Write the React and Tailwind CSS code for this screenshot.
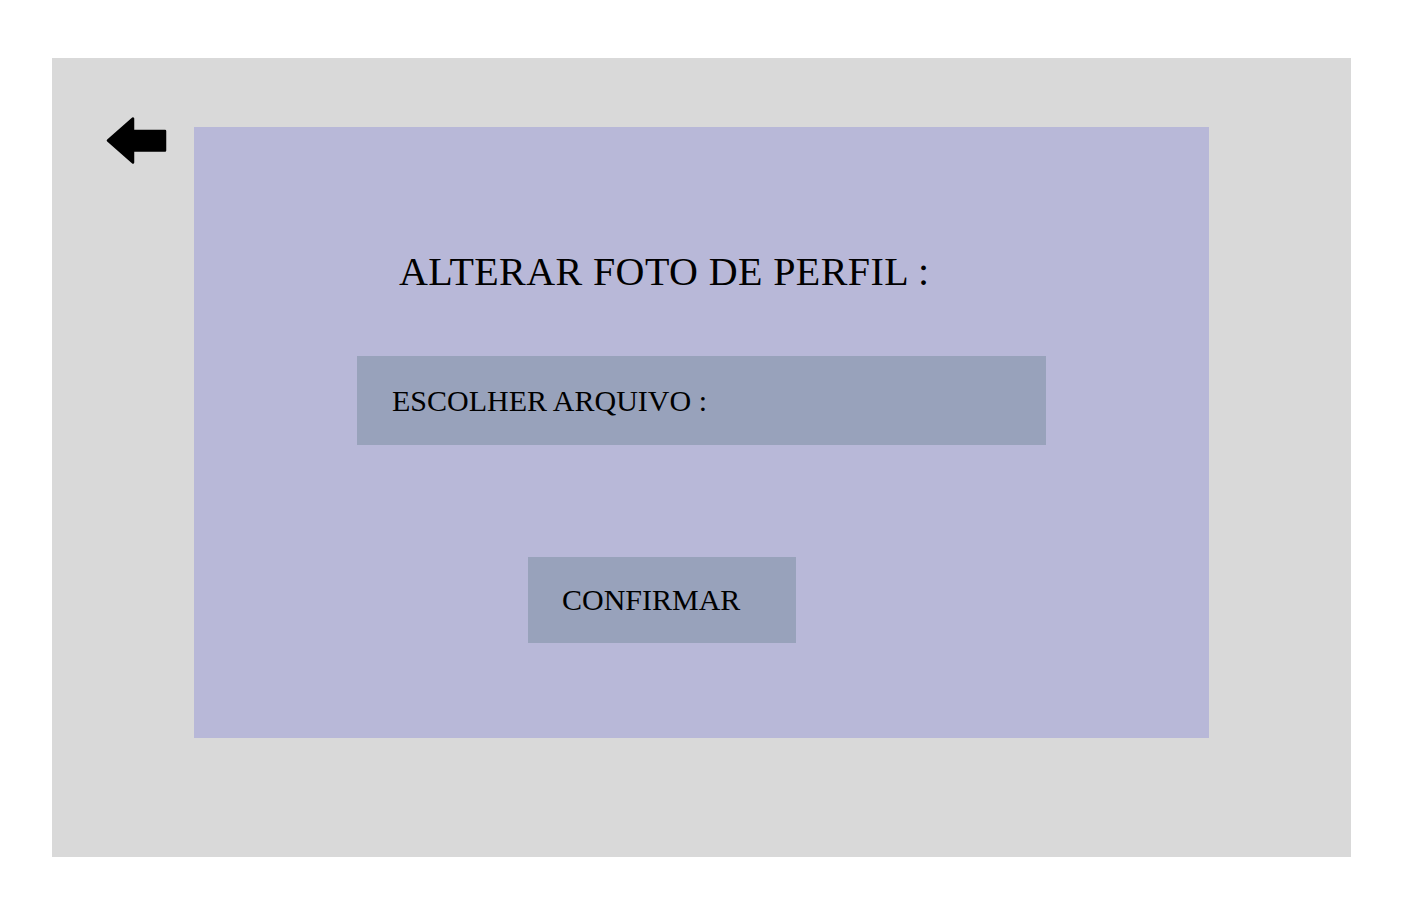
export default function App() {
  return (
    <div className="w-[1403px] h-[916px] bg-white pt-[58px] pl-[52px]" style={{ fontFamily: '"Liberation Serif", serif' }}>
      <div className="w-[1299px] h-[799px] bg-[#d9d9d9] flex items-start">
        {/* boton volver */}
        <button className="ml-[54px] mt-[59px] w-[61px] h-[47px]">
          <svg width="61" height="47" viewBox="0 0 61 47">
            <polygon
              points="2,23.5 27,1.5 27,14 59,14 59,33.5 27,33.5 27,45.5"
              fill="#000"
              stroke="#000"
              strokeWidth="2.5"
              strokeLinejoin="round"
            />
          </svg>
        </button>

        <div className="ml-[27px] mt-[69px] w-[1015px] h-[611px] bg-[#b8b8d8] flex flex-col">
          <h1 className="ml-[205px] mt-[125px] text-[40px] leading-none tracking-[0.4px] text-black">
            ALTERAR FOTO DE PERFIL :
          </h1>

          <div className="ml-[163px] mt-[64px] w-[689px] h-[89px] bg-[#98a2bb] flex items-center pl-[35px]">
            <span className="text-[30px] leading-none text-black">ESCOLHER ARQUIVO :</span>
          </div>

          <button className="ml-[334px] mt-[112px] w-[268px] h-[86px] bg-[#98a2bb] flex items-center pl-[34px]">
            <span className="text-[30px] leading-none text-black">CONFIRMAR</span>
          </button>
        </div>
      </div>
    </div>
  );
}
